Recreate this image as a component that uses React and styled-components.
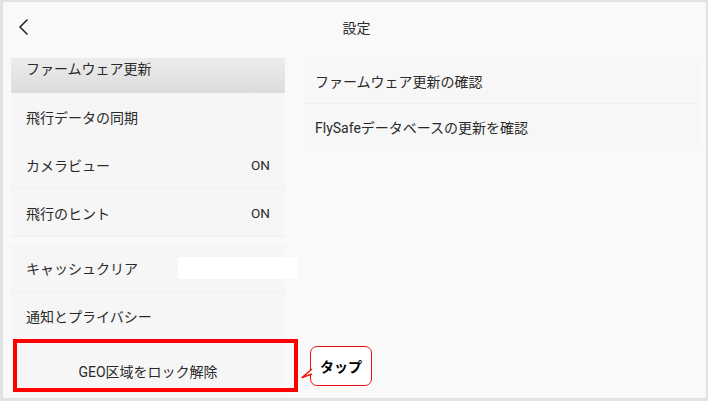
import React from "react";
import styled, { createGlobalStyle } from "styled-components";

const GlobalStyle = createGlobalStyle`
  html, body {
    margin: 0;
    padding: 0;
    background: #e4e4e4;
  }
  body {
    font-family: Roboto, "Noto Sans CJK JP", sans-serif;
    color: #2a2a2a;
  }
`;

const leftItems = [
  { label: "飛行データの同期" },
  { label: "カメラビュー", value: "ON", line: true },
  { label: "飛行のヒント", value: "ON", line: true },
];

const App = () => {
  return (
    <>
      <GlobalStyle />
      <Frame>
        <Header>
          <Back aria-label="back">
            <svg width="12" height="18" viewBox="0 0 12 18">
              <path
                d="M9.5 1.5 L2 9 L9.5 16.5"
                fill="none"
                stroke="#222"
                strokeWidth="1.5"
              />
            </svg>
          </Back>
          <Title>設定</Title>
        </Header>

        <Body>
          <LeftList>
            <ActiveRow>ファームウェア更新</ActiveRow>
            {leftItems.map((item) => (
              <Row key={item.label} $line={item.line}>
                <span>{item.label}</span>
                {item.value && <Value>{item.value}</Value>}
              </Row>
            ))}
            <Row $line $gap>
              <span>キャッシュクリア</span>
              <Redact />
            </Row>
            <Row>
              <span>通知とプライバシー</span>
            </Row>
            <GeoRow>
              GEO区域をロック解除
              <Marker />
              <Callout>
                タップ
                <svg width="12" height="14" viewBox="0 0 12 14">
                  <path
                    d="M11 1 L1 9.5 L11 6"
                    fill="#fff"
                    stroke="#f01010"
                    strokeWidth="1.4"
                    strokeLinejoin="round"
                  />
                </svg>
              </Callout>
            </GeoRow>
          </LeftList>

          <RightList>
            <RightRow $line>ファームウェア更新の確認</RightRow>
            <RightRow>FlySafeデータベースの更新を確認</RightRow>
          </RightList>
        </Body>
      </Frame>
    </>
  );
};

export default App;

const Frame = styled.div`
  box-sizing: border-box;
  width: 708px;
  height: 401px;
  border-style: solid;
  border-color: #e2e2e2;
  border-width: 2px 2px 3px 3px;
  background: #f9f9f9;
  display: flex;
  flex-direction: column;
  overflow: hidden;
`;

const Header = styled.div`
  height: 50px;
  display: flex;
  align-items: center;
  justify-content: center;
  position: relative;
`;

const Back = styled.div`
  position: absolute;
  left: 15px;
  top: 16px;
  display: flex;
`;

const Title = styled.div`
  font-size: 14px;
  font-weight: 400;
  margin-left: 4px;
`;

const Body = styled.div`
  flex: 1;
  display: grid;
  grid-template-columns: 274px 395px;
  column-gap: 20px;
  padding: 6px 0 0 8px;
  align-items: start;
`;

const LeftList = styled.div`
  display: flex;
  flex-direction: column;
  font-size: 14px;
`;

const ActiveRow = styled.div`
  height: 35px;
  box-sizing: border-box;
  padding: 1px 15px 0;
  background: linear-gradient(#ececec, #dcdcdc);
  line-height: 20px;
`;

const Row = styled.div`
  position: relative;
  box-sizing: border-box;
  height: 48px;
  margin-top: ${(p) => (p.$gap ? "7px" : "0")};
  padding: 0 15px;
  display: flex;
  align-items: center;
  justify-content: space-between;
  background: #f6f6f6;
  border-bottom: 1px solid ${(p) => (p.$line ? "#f0f0f0" : "transparent")};
`;

const Value = styled.span`
  font-size: 13.5px;
`;

const Redact = styled.div`
  position: absolute;
  left: 167px;
  top: 13px;
  width: 119px;
  height: 22px;
  background: #fff;
`;

const GeoRow = styled.div`
  position: relative;
  height: 54px;
  display: flex;
  align-items: center;
  justify-content: center;
  background: #f6f6f6;
  padding-top: 8px;
  box-sizing: border-box;
`;

const Marker = styled.div`
  position: absolute;
  left: 2px;
  top: -1px;
  width: 285px;
  height: 53px;
  box-sizing: border-box;
  border: 4px solid #ff0000;
`;

const Callout = styled.div`
  position: absolute;
  left: 299px;
  top: 6px;
  width: 62px;
  height: 40px;
  box-sizing: border-box;
  border: 1.5px solid #f01010;
  border-radius: 7px;
  background: #fff;
  display: flex;
  align-items: center;
  justify-content: center;
  font-weight: 700;
  font-size: 14px;
  color: #000;

  svg {
    position: absolute;
    left: -10px;
    bottom: 3px;
  }
`;

const RightList = styled.div`
  display: flex;
  flex-direction: column;
  font-size: 14px;
  background: #f7f7f7;
`;

const RightRow = styled.div`
  height: 46px;
  box-sizing: border-box;
  display: flex;
  align-items: center;
  padding: 0 10px;
  border-bottom: 1px solid ${(p) => (p.$line ? "#f0f0f0" : "transparent")};
`;
